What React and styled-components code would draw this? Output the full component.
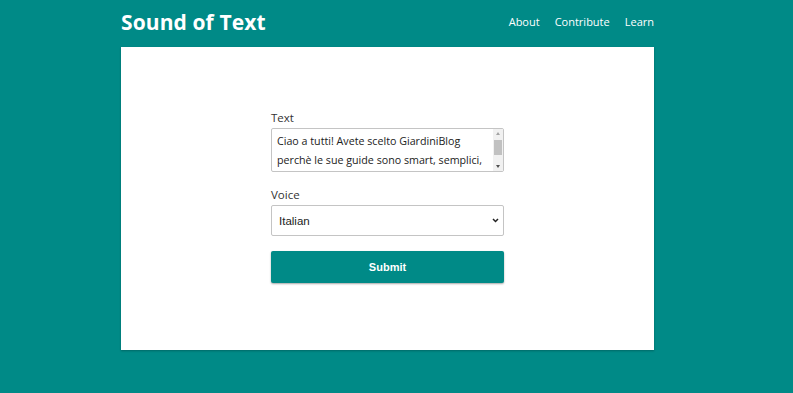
import React, { useState } from "react";
import styled, { createGlobalStyle } from "styled-components";

const GlobalStyle = createGlobalStyle`
  html, body {
    margin: 0;
    padding: 0;
    background: #008a87;
    font-family: "Open Sans", "Noto Sans", sans-serif;
  }
  * { box-sizing: border-box; }
`;

// leaves room where the page scrollbar sat in the original
const Page = styled.div`
  min-height: 393px;
  padding-right: 18px;
  background: #008a87;
`;

const Wrapper = styled.div`
  width: 533px;
  margin: 0 auto;
`;

const Header = styled.header`
  display: flex;
  align-items: center;
  justify-content: space-between;
  height: 47px;
  padding-bottom: 4px;
`;

const Title = styled.h1`
  margin: 0;
  color: #fff;
  font-size: 21px;
  font-weight: 700;
  letter-spacing: 0.1px;
`;

const Nav = styled.nav`
  display: flex;
  gap: 15px;
`;

const NavLink = styled.a`
  color: #fff;
  font-size: 11px;
  text-decoration: none;
`;

const Card = styled.main`
  background: #fff;
  height: 303px;
  padding-top: 62px;
  box-shadow: 0 1px 2px rgba(0, 0, 0, 0.25);
`;

const Form = styled.form`
  width: 233px;
  margin-left: 150px;
  display: flex;
  flex-direction: column;
`;

const Label = styled.label`
  display: flex;
  flex-direction: column;
  margin-bottom: ${(p) => p.$gap || 0}px;
`;

const LabelText = styled.span`
  color: #333;
  font-size: 11.5px;
  line-height: 17px;
  margin-bottom: 2px;
`;

const Field = styled.div`
  position: relative;
  display: flex;
`;

const TextArea = styled.textarea`
  flex: 1;
  height: 44px;
  padding: 3px 12px 0 5px;
  border: 1px solid #c4c4c4;
  border-radius: 2px;
  font-family: "Open Sans", sans-serif;
  font-size: 10.7px;
  line-height: 19px;
  color: #222;
  resize: none;
  overflow: hidden;
`;

// native-looking scrollbar drawn over the textarea's right edge
const ScrollBar = styled.div`
  position: absolute;
  top: 1px;
  right: 1px;
  bottom: 1px;
  width: 10px;
  background: #f1f1f1;
  display: flex;
  flex-direction: column;
  align-items: center;
  justify-content: space-between;
  padding: 3px 0;
  pointer-events: none;
`;

const Arrow = styled.span`
  width: 0;
  height: 0;
  border-left: 2.5px solid transparent;
  border-right: 2.5px solid transparent;
  ${(p) =>
    p.$down ? "border-top: 3px solid #505050;" : "border-bottom: 3px solid #a3a3a3;"}
`;

const Thumb = styled.span`
  width: 8px;
  height: 15px;
  margin-top: -6px;
  background: #c1c1c1;
`;

const Select = styled.select`
  flex: 1;
  height: 31px;
  padding: 0 20px 0 7px;
  border: 1px solid #c4c4c4;
  border-radius: 2px;
  background: #fff;
  appearance: none;
  font-family: "Liberation Sans", Arial, sans-serif;
  font-size: 11.5px;
  color: #222;
`;

const Chevron = styled.svg`
  position: absolute;
  right: 5px;
  top: 13px;
  width: 7px;
  height: 5px;
  pointer-events: none;
`;

const Button = styled.button`
  height: 32px;
  border: none;
  border-radius: 2px;
  background: #008a87;
  color: #fff;
  font-family: "Liberation Sans", Arial, sans-serif;
  font-size: 11px;
  font-weight: 700;
  box-shadow: 0 1px 2px rgba(0, 0, 0, 0.35);
  cursor: pointer;
`;

const App = () => {
  const [text, setText] = useState(
    "Ciao a tutti! Avete scelto GiardiniBlog perchè le sue guide sono smart, semplici, pratiche e sempre aggiornate. Buona lettura!"
  );
  const [voice, setVoice] = useState("it-IT");

  return (
    <Page>
      <GlobalStyle />
      <Wrapper>
        <Header>
          <Title>Sound of Text</Title>
          <Nav>
            <NavLink href="#">About</NavLink>
            <NavLink href="#">Contribute</NavLink>
            <NavLink href="#">Learn</NavLink>
          </Nav>
        </Header>
        <Card>
          <Form onSubmit={(e) => e.preventDefault()}>
            <Label $gap={14}>
              <LabelText>Text</LabelText>
              <Field>
                <TextArea value={text} onChange={(e) => setText(e.target.value)} />
                <ScrollBar>
                  <Arrow />
                  <Thumb />
                  <Arrow $down />
                </ScrollBar>
              </Field>
            </Label>
            <Label $gap={15}>
              <LabelText>Voice</LabelText>
              <Field>
                <Select value={voice} onChange={(e) => setVoice(e.target.value)}>
                  <option value="en-US">English (US)</option>
                  <option value="it-IT">Italian</option>
                  <option value="fr-FR">French</option>
                </Select>
                <Chevron viewBox="0 0 7 5">
                  <path d="M1 1l2.5 2.5L6 1" fill="none" stroke="#222" strokeWidth="1.5" />
                </Chevron>
              </Field>
            </Label>
            <Button type="submit">Submit</Button>
          </Form>
        </Card>
      </Wrapper>
    </Page>
  );
};

export default App;
